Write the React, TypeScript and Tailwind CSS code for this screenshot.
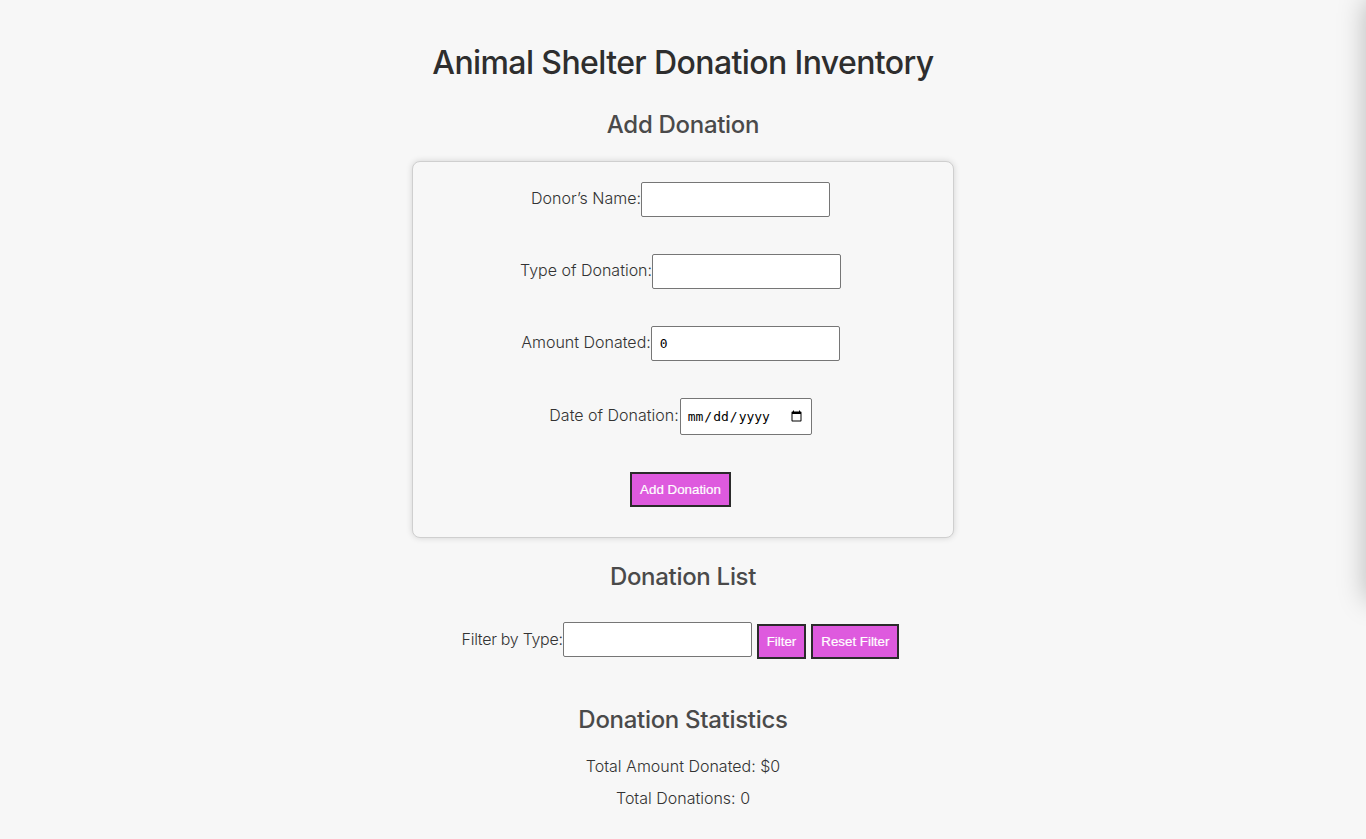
import { useState } from "react";

type Donation = {
  name: string;
  type: string;
  amount: number;
  date: string;
};

const inputCls =
  "h-[35px] w-[189px] rounded-[2px] border border-[#767676] bg-white px-2 text-[13px] text-black outline-none [font-family:'DejaVu_Sans_Mono','Liberation_Mono',monospace]";

const btnCls =
  "h-[35px] border-2 border-[#2b2b2b] bg-[#de5ade] px-[8px] text-[13.33px] text-white [font-family:'Liberation_Sans',Arial,sans-serif] [-webkit-text-stroke:0.2px_white]";

const rowCls = "flex items-center pr-[5px] text-[16px] font-light";

export default function App() {
  const [donations, setDonations] = useState<Donation[]>([]);
  const [name, setName] = useState("");
  const [type, setType] = useState("");
  const [amount, setAmount] = useState("0");
  const [date, setDate] = useState("");
  const [filter, setFilter] = useState("");
  const [activeFilter, setActiveFilter] = useState("");

  const addDonation = () => {
    if (!name || !type) return;
    setDonations((d) => [...d, { name, type, amount: Number(amount) || 0, date }]);
    setName("");
    setType("");
    setAmount("0");
    setDate("");
  };

  const shown = activeFilter
    ? donations.filter((d) => d.type.toLowerCase().includes(activeFilter.toLowerCase()))
    : donations;
  const total = donations.reduce((s, d) => s + d.amount, 0);

  return (
    <div className="min-h-[839px] overflow-hidden bg-[#f7f7f7] pt-[42px] pb-10 text-[#333] [font-family:Inter,'Noto_Sans',sans-serif]">
      {/* offscreen drawer, only its shadow shows at the right edge */}
      <div className="fixed left-full top-0 h-[600px] w-[260px] bg-white shadow-[0_0_26px_rgba(0,0,0,0.25)]" />

      <div className="flex flex-col items-center">
        <h1 className="text-[32px] leading-[42px] font-medium tracking-[-0.6px] text-[#2e2e2e]">
          Animal Shelter Donation Inventory
        </h1>

        <h2 className="mt-[25px] text-[24px] leading-[32px] font-medium tracking-[-0.3px] text-[#4a4a4a]">
          Add Donation
        </h2>

        <form
          onSubmit={(e) => {
            e.preventDefault();
            addDonation();
          }}
          className="mt-[20px] flex w-[542px] flex-col items-center gap-[37px] rounded-lg border border-[#cfcfcf] bg-[#f7f7f7] pt-[20px] pb-[30px] shadow-[0_0_6px_rgba(0,0,0,0.15)]"
        >
          <div className={rowCls}>
            <label className="-mt-[3px]">Donor’s Name:</label>
            <input className={inputCls} value={name} onChange={(e) => setName(e.target.value)} />
          </div>
          <div className={rowCls}>
            <label className="-mt-[3px]">Type of Donation:</label>
            <input className={inputCls} value={type} onChange={(e) => setType(e.target.value)} />
          </div>
          <div className={rowCls}>
            <label className="-mt-[3px]">Amount Donated:</label>
            <input
              type="number"
              className={inputCls}
              value={amount}
              onChange={(e) => setAmount(e.target.value)}
            />
          </div>
          <div className={rowCls}>
            <label className="-mt-[3px]">Date of Donation:</label>
            <input
              type="date"
              className={`${inputCls} !h-[37px] !w-[132px] ml-[1px] !px-[6px]`}
              value={date}
              onChange={(e) => setDate(e.target.value)}
            />
          </div>
          <button type="submit" className={`${btnCls} mr-[5px]`}>
            Add Donation
          </button>
        </form>

        <h2 className="mt-[23px] text-[24px] leading-[32px] font-medium tracking-[-0.3px] text-[#4a4a4a]">
          Donation List
        </h2>

        <div className="mt-[29px] flex items-start pr-[5px] text-[16px] font-light">
          <label className="-mt-[3px] self-center tracking-[-0.3px]">Filter by Type:</label>
          <input className={inputCls} value={filter} onChange={(e) => setFilter(e.target.value)} />
          <button className={`${btnCls} ml-[5px] mt-[2px]`} onClick={() => setActiveFilter(filter)}>
            Filter
          </button>
          <button
            className={`${btnCls} ml-[5px] mt-[2px]`}
            onClick={() => {
              setFilter("");
              setActiveFilter("");
            }}
          >
            Reset Filter
          </button>
        </div>

        {shown.length > 0 && (
          <ul className="mt-4 text-[15px]">
            {shown.map((d, i) => (
              <li key={i}>
                {d.name} — {d.type}: ${d.amount} {d.date && `(${d.date})`}
              </li>
            ))}
          </ul>
        )}

        <h2 className="mt-[45px] text-[24px] leading-[32px] font-medium tracking-[-0.3px] text-[#4a4a4a]">
          Donation Statistics
        </h2>
        <p className="mt-[18px] text-[16px] leading-[24px] font-light">Total Amount Donated: ${total}</p>
        <p className="mt-[8px] text-[16px] leading-[24px] font-light">Total Donations: {donations.length}</p>
      </div>
    </div>
  );
}
